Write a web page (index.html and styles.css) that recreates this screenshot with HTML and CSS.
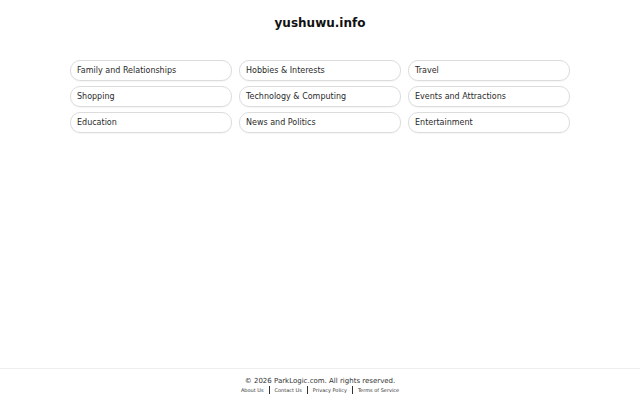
FILE: index.html
```html
<!DOCTYPE html>
<html lang="en">
<head>
  <meta charset="UTF-8" />
  <meta name="viewport" content="width=device-width, initial-scale=1" />
  <title>yushuwu.info</title>
  <link rel="stylesheet" href="styles.css">
</head>
<body>

  <div class="page">
    <h1 class="domain">yushuwu.info</h1>

    <div class="topics">
      <a class="topic" href="#">Family and Relationships</a>
      <a class="topic" href="#">Hobbies &amp; Interests</a>
      <a class="topic" href="#">Travel</a>
      <a class="topic" href="#">Shopping</a>
      <a class="topic" href="#">Technology &amp; Computing</a>
      <a class="topic" href="#">Events and Attractions</a>
      <a class="topic" href="#">Education</a>
      <a class="topic" href="#">News and Politics</a>
      <a class="topic" href="#">Entertainment</a>
    </div>
  </div>

  <footer class="footer">
    <div class="copyright">&copy; 2026 ParkLogic.com. All rights reserved.</div>
    <div class="links">
      <a href="#">About Us</a>
      <span class="sep"></span>
      <a href="#">Contact Us</a>
      <span class="sep"></span>
      <a href="#">Privacy Policy</a>
      <span class="sep"></span>
      <a href="#">Terms of Service</a>
    </div>
  </footer>

</body>
</html>
```

FILE: styles.css
```css
html, body {
  height: 100%;
}

body {
  margin: 0;
  background: #fff;
  color: #1f1f1f;
  font-family: "DejaVu Sans", sans-serif;
  display: flex;
  flex-direction: column;
}

.page {
  flex: 1;
}

.domain {
  margin: 15px 0 0;
  font-size: 12px;
  line-height: 16px;
  text-align: center;
  color: #111;
}

.topics {
  width: 500px;
  margin: 29px auto 0;
  display: grid;
  grid-template-columns: repeat(3, 1fr);
  column-gap: 7px;
  row-gap: 5px;
}

.topic {
  display: block;
  height: 19px;
  line-height: 19px;
  padding: 0 6px;
  border: 1px solid #dcdcdc;
  border-radius: 10px;
  font-size: 8px;
  color: #2a2a2a;
  text-decoration: none;
  box-shadow: 0 1px 1px rgba(0,0,0,0.04);
}

.footer {
  border-top: 1px solid #eee;
  padding: 7px 0 6px;
  text-align: center;
}

.copyright {
  font-size: 7px;
  line-height: 10px;
  color: #333;
}

.links {
  display: flex;
  justify-content: center;
  align-items: center;
  gap: 5px;
}

.links a {
  font-size: 5px;
  color: #333;
  text-decoration: none;
}

.sep {
  width: 1px;
  height: 8px;
  background: #333;
}
```
